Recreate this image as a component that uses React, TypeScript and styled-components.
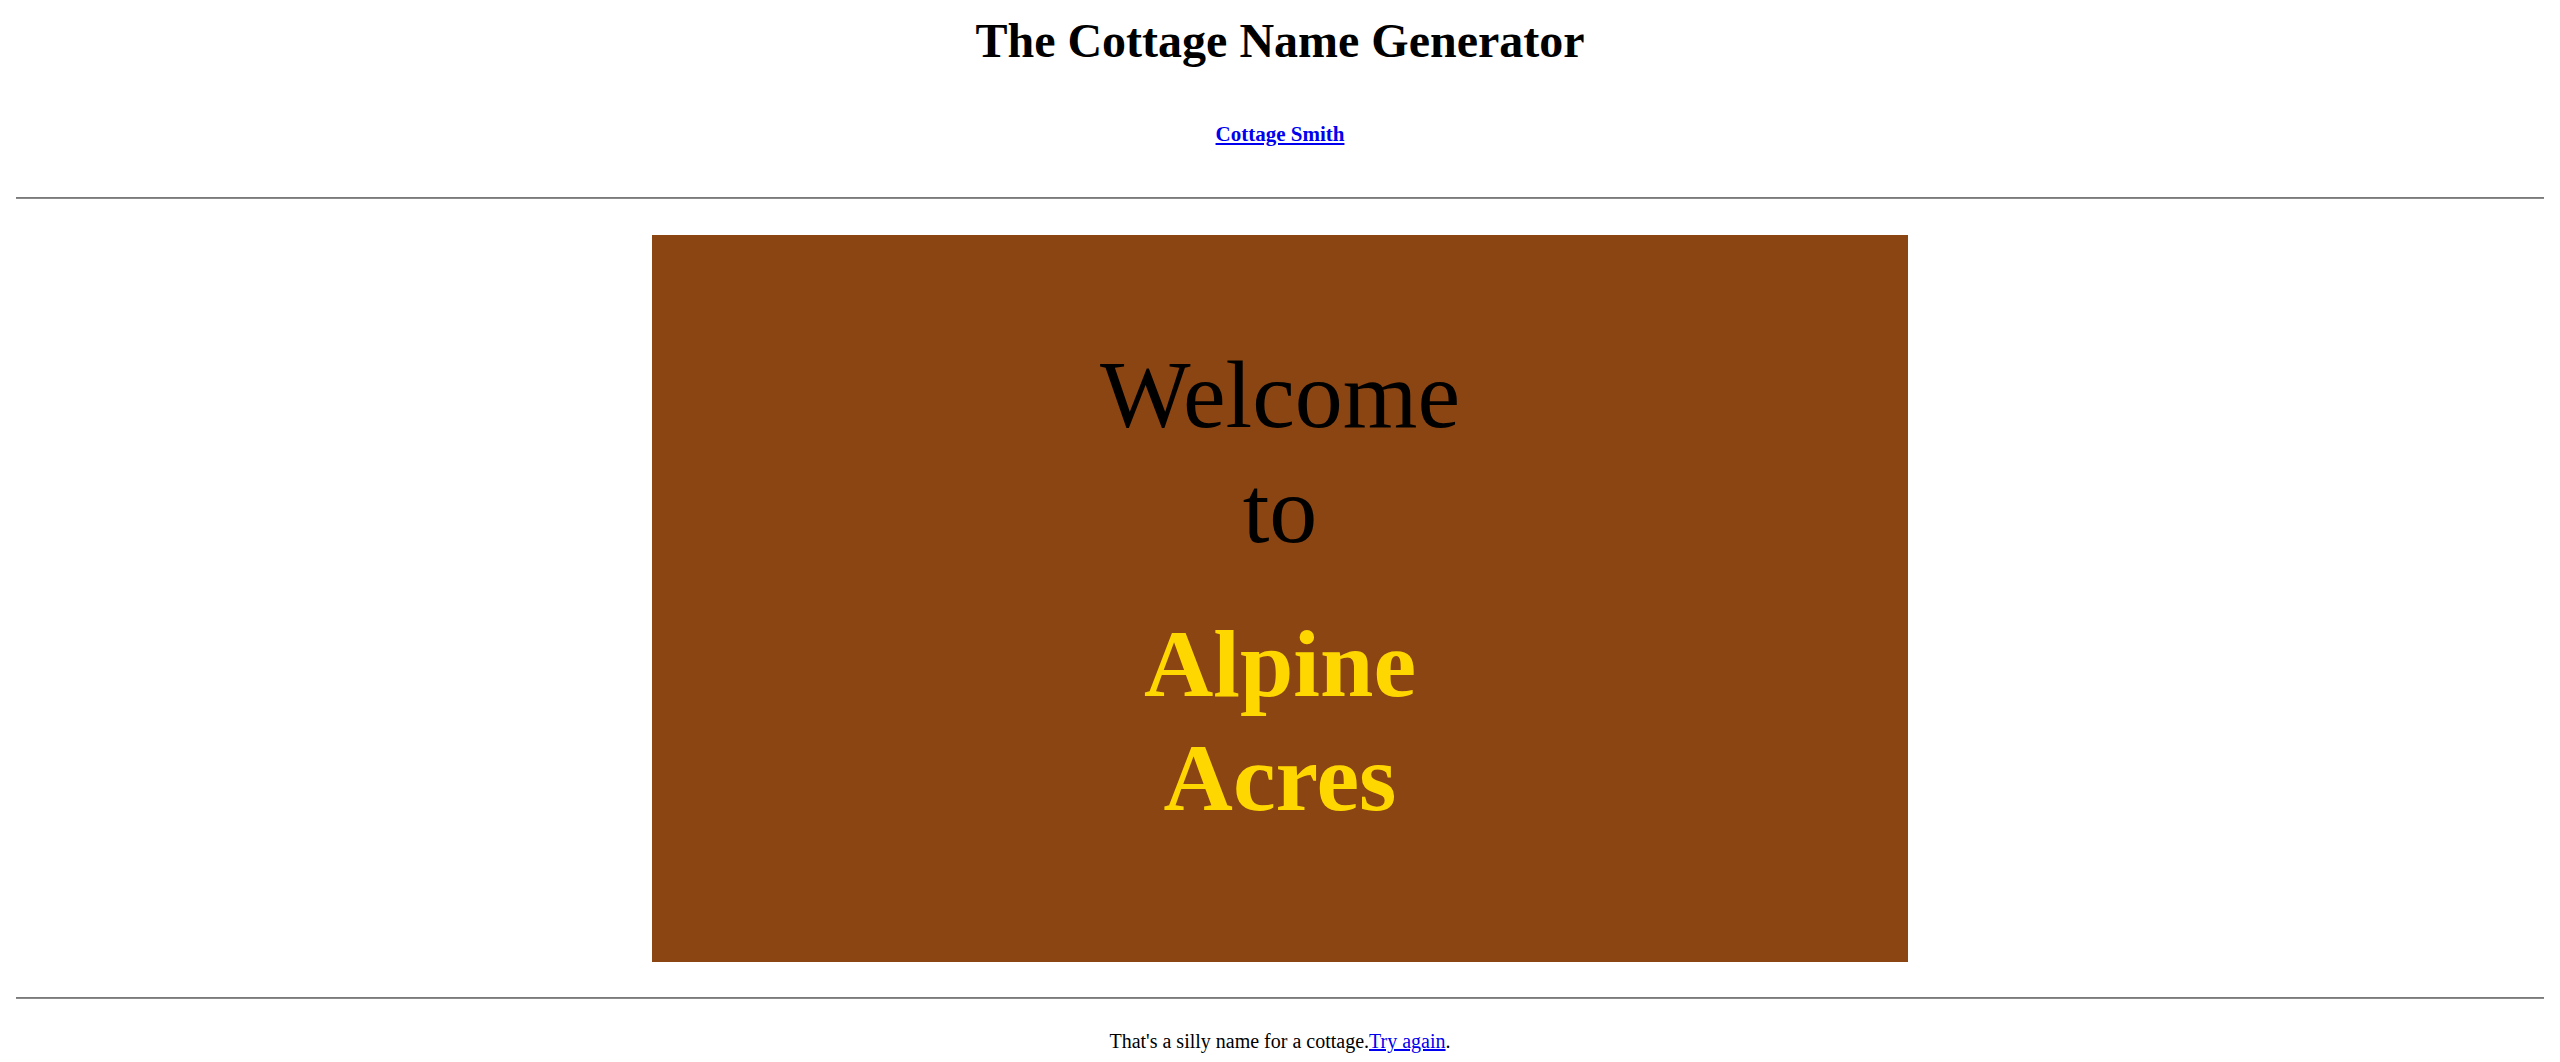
import React from "react";
import styled, { createGlobalStyle } from "styled-components";

const GlobalStyle = createGlobalStyle`
  html, body {
    margin: 0;
    padding: 0;
    background: #ffffff;
  }
  body {
    font-family: "Liberation Serif", "Times New Roman", serif;
    color: #000000;
  }
`;

const Page = styled.div`
  padding: 0 16px;
  display: flex;
  flex-direction: column;
  align-items: stretch;
`;

const Title = styled.h1`
  margin: 13px 0 0;
  font-size: 48px;
  line-height: 55px;
  font-weight: bold;
  text-align: center;
`;

const Subtitle = styled.h3`
  margin: 54px 0 0;
  font-size: 21px;
  line-height: 24px;
  font-weight: bold;
  text-align: center;
`;

const Link = styled.a`
  color: #0000ee;
  text-decoration: underline;
  cursor: pointer;
`;

const Rule = styled.hr<{ $top: number; $bottom: number }>`
  margin: ${(p) => p.$top}px 0 ${(p) => p.$bottom}px;
  height: 0;
  border: none;
  border-top: 1px solid #7a7a7a;
  border-bottom: 1px solid #8a8a8a;
`;

const Sign = styled.section`
  align-self: center;
  box-sizing: border-box;
  width: 1256px;
  height: 727px;
  padding-top: 102px;
  background: #8b4513;
  display: flex;
  flex-direction: column;
  align-items: center;
`;

const Welcome = styled.div`
  font-size: 96px;
  line-height: 115px;
  font-weight: normal;
  text-align: center;
  color: #000000;
`;

const CottageName = styled.div`
  margin-top: 40px;
  font-size: 96px;
  line-height: 114px;
  font-weight: bold;
  text-align: center;
  color: #ffd700;
`;

const Footer = styled.p`
  margin: 31px 0 0;
  font-size: 20px;
  line-height: 23px;
  text-align: center;
`;

export default function App() {
  return (
    <>
      <GlobalStyle />
      <Page>
        <Title>The Cottage Name Generator</Title>
        <Subtitle>
          <Link href="#">Cottage Smith</Link>
        </Subtitle>
        <Rule $top={51} $bottom={36} />
        <Sign>
          <Welcome>
            Welcome
            <br />
            to
          </Welcome>
          <CottageName>
            Alpine
            <br />
            Acres
          </CottageName>
        </Sign>
        <Rule $top={35} $bottom={0} />
        <Footer>
          That's a silly name for a cottage.<Link href="#">Try again</Link>.
        </Footer>
      </Page>
    </>
  );
}
